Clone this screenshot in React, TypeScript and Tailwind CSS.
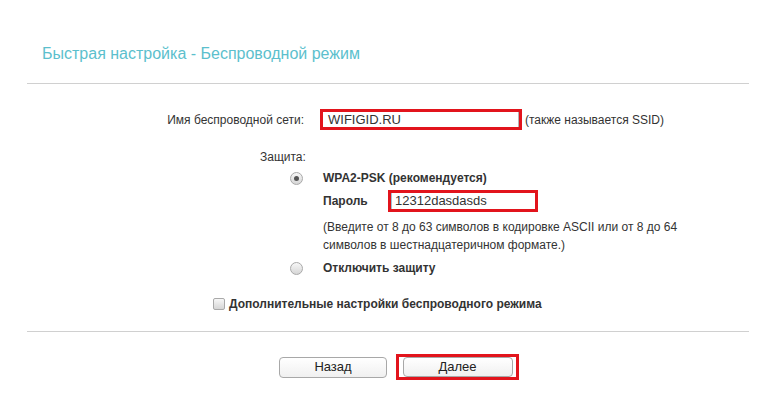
import React from "react";

function Radio({ checked }: { checked?: boolean }) {
  return (
    <div className="w-[13px] h-[13px] rounded-full border border-[#a9a9a9] bg-gradient-to-b from-[#f7f7f7] to-[#d6d6d6] flex items-center justify-center">
      {checked && <div className="w-[5px] h-[5px] rounded-full bg-[#555]" />}
    </div>
  );
}

export default function App() {
  return (
    <div
      className="w-[776px] h-[405px] bg-white text-[#333] overflow-hidden"
      style={{ fontFamily: '"Liberation Sans", Arial, sans-serif' }}
    >
      <div className="pt-[44px] pl-[42px] text-[16px] leading-[20px] text-[#5cbfcd]">
        Быстрая настройка - Беспроводной режим
      </div>
      <div className="mt-[19px] mx-[27px] h-px bg-[#d0d0d0]" />

      {/* SSID row */}
      <div className="mt-[25px] flex items-center h-[21px]">
        <div className="w-[304px] text-right text-[12px]">Имя беспроводной сети:</div>
        <div className="ml-[16px] w-[202px] h-[21px] border-[3px] border-[#e2141c] flex">
          <div className="flex-1 border-r border-[#b5b5b5] flex items-center pl-[5px] text-[13px] text-[#333]">
            WIFIGID.RU
          </div>
        </div>
        <div className="ml-[3px] text-[12px]">(также называется SSID)</div>
      </div>

      {/* Защита */}
      <div className="mt-[18px] ml-[260px] h-[18px] flex items-center text-[12px]">Защита:</div>

      {/* WPA2 */}
      <div className="mt-[3px] h-[18px] flex items-center">
        <div className="ml-[290px]">
          <Radio checked />
        </div>
        <div className="ml-[20px] text-[12px] font-bold">WPA2-PSK (рекомендуется)</div>
      </div>

      {/* Password */}
      <div className="mt-[3px] h-[22px] flex items-center pl-[323px]">
        <div className="w-[65px] text-[12px] font-bold">Пароль</div>
        <div className="w-[150px] h-[22px] border-[3px] border-[#e2141c] flex">
          <div className="flex-1 border-l border-[#9fc3d8] flex items-center pl-[3px] text-[13px] text-[#333]">
            12312dasdasds
          </div>
        </div>
      </div>

      {/* Help */}
      <div className="mt-[6px] pl-[323px] text-[12px] leading-[18px]">
        <div>(Введите от 8 до 63 символов в кодировке ASCII или от 8 до 64</div>
        <div>символов в шестнадцатеричном формате.)</div>
      </div>

      {/* Disable */}
      <div className="mt-[5px] h-[18px] flex items-center">
        <div className="ml-[290px]">
          <Radio />
        </div>
        <div className="ml-[20px] text-[12px] font-bold">Отключить защиту</div>
      </div>

      {/* Checkbox */}
      <div className="mt-[18px] h-[18px] flex items-center pl-[213px]">
        <div className="w-[12px] h-[12px] rounded-[2px] border border-[#a9a9a9] bg-gradient-to-b from-[#f7f7f7] to-[#d6d6d6]" />
        <div className="ml-[4px] text-[12px] font-bold">Дополнительные настройки беспроводного режима</div>
      </div>

      <div className="mt-[18px] mx-[27px] h-px bg-[#d0d0d0]" />

      {/* Buttons */}
      <div className="mt-[22px] h-[26px] flex items-center pl-[279px]">
        <div className="w-[108px] h-[21px] rounded-[4px] border border-[#a8a8a8] bg-gradient-to-b from-white to-[#f0f0f0] flex items-center justify-center text-[13px] text-[#222]">
          Назад
        </div>
        <div className="ml-[9px] w-[123px] h-[26px] border-[3px] border-[#e2141c] flex items-center justify-center">
          <div className="w-[110px] h-[20px] rounded-[4px] border border-[#a8a8a8] bg-gradient-to-b from-white to-[#f0f0f0] flex items-center justify-center text-[13px] text-[#222]">
            Далее
          </div>
        </div>
      </div>
    </div>
  );
}
